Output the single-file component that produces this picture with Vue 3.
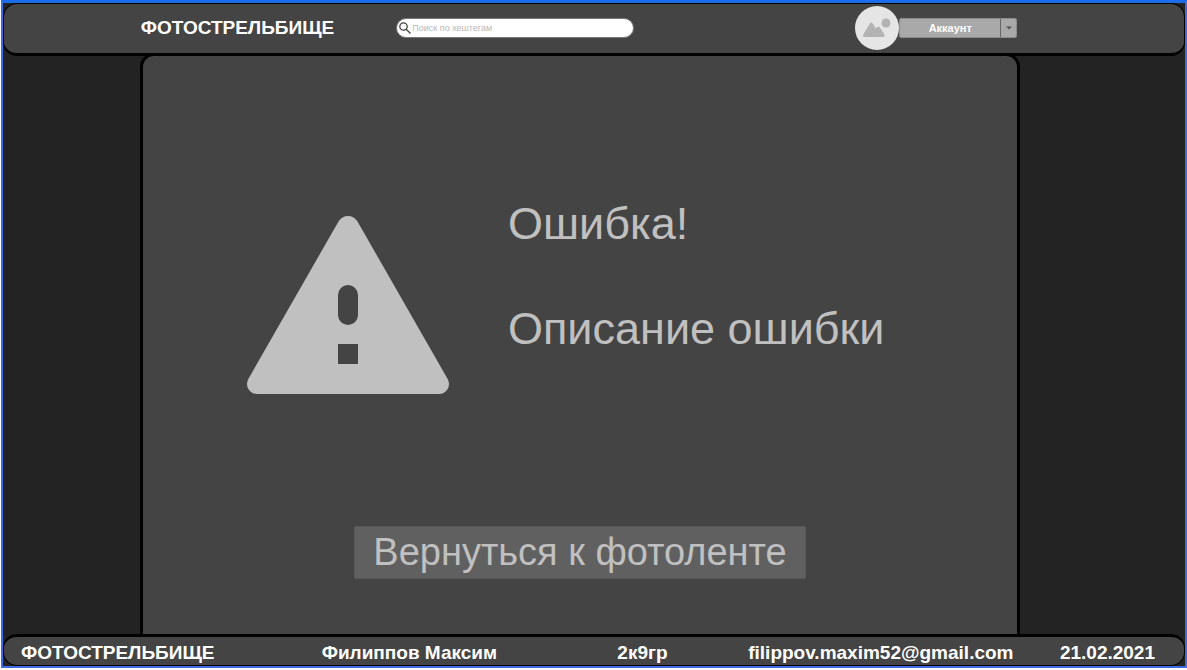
<script setup>
import { ref } from 'vue'

const query = ref('')
const footerItems = ['ФОТОСТРЕЛЬБИЩЕ', 'Филиппов Максим', '2к9гр']
const email = 'filippov.maxim52@gmail.com'
const date = '21.02.2021'
</script>

<template>
  <div class="window">
    <div class="page">
      <header class="header">
        <div class="header-inner">
          <a class="logo" href="#">ФОТОСТРЕЛЬБИЩЕ</a>
          <label class="search">
            <svg class="search-icon" viewBox="0 0 12 12" aria-hidden="true">
              <circle cx="4.5" cy="4.5" r="3.7" />
              <path d="M7.2 7.2 11.5 11.5" />
            </svg>
            <input v-model="query" type="text" placeholder="Поиск по хештегам" aria-label="Поиск по хештегам" />
          </label>
          <div class="account">
            <svg class="avatar" viewBox="0 0 44 44" aria-hidden="true">
              <circle cx="22" cy="22" r="22" fill="#e5e5e5" />
              <circle cx="31" cy="17" r="4.5" fill="#b3b3b3" />
              <path
                d="M8.500 28 14.700 17.800Q16.300 15.300 17.900 17.800L20.800 22.500L22.300 20.900Q23.600 19.800 24.800 21.200L29.400 28.500Q30.400 31 27.800 31H10Q7 31 8.500 28Z"
                fill="#b3b3b3"
              />
            </svg>
            <div class="split">
              <button class="split-main" type="button">Аккаунт</button>
              <button class="split-arrow" type="button" aria-label="Открыть меню">
                <svg viewBox="0 0 6 4" aria-hidden="true"><path d="M0 0.5H6L3 3.5Z" /></svg>
              </button>
            </div>
          </div>
        </div>
      </header>

      <div class="body">
        <main class="panel">
          <section class="error">
            <svg class="warning" viewBox="0 0 202 178" role="img" aria-label="Предупреждение">
              <path
                fill-rule="evenodd"
                d="M91.5 5.5A11 11 0 0 1 110.500 5.500L200.660 163A10 10 0 0 1 192 178H10A10 10 0 0 1 1.340 163ZM91 79V99A10 10 0 0 0 111 99V79A10 10 0 0 0 91 79ZM91 128V148H111V128Z"
              />
            </svg>
            <div class="message">
              <h1>Ошибка!</h1>
              <p>Описание ошибки</p>
            </div>
          </section>
          <button class="back" type="button">Вернуться к фотоленте</button>
        </main>
      </div>

      <footer class="footer">
        <span v-for="item in footerItems" :key="item">{{ item }}</span>
        <a :href="`mailto:${email}`">{{ email }}</a>
        <time datetime="2021-02-21">{{ date }}</time>
      </footer>
    </div>
  </div>
</template>

<style>
body {
  margin: 0;
  background: #fff;
}
</style>

<style scoped>
* {
  box-sizing: border-box;
}

.window {
  min-height: 100vh;
  padding: 0 0 2px 1px;
  display: flex;
  font-family: "Liberation Sans", Arial, sans-serif;
}

.page {
  flex: 1;
  display: flex;
  flex-direction: column;
  border: 2px solid #4169e1;
  border-top: 3px solid #1a6ce8;
  background: #232323;
}

a {
  color: inherit;
  text-decoration: none;
}

button {
  font-family: inherit;
  cursor: pointer;
}

.header {
  display: grid;
  grid-template-columns: 137fr 878fr 167fr;
  height: 53px;
  border: 1px solid #000;
  border-bottom-width: 3px;
  border-radius: 14px;
  background: #444;
}

.header-inner {
  grid-column: 2;
  display: grid;
  grid-template-columns: 256fr 238fr 384fr;
  align-items: center;
  padding-bottom: 2px;
}

.logo {
  color: #fff;
  font-size: 19px;
  font-weight: bold;
}

.search {
  display: flex;
  align-items: center;
  gap: 1px;
  height: 20px;
  padding: 0 10px 0 2px;
  border: 1px solid #777;
  border-radius: 10px;
  background: #fff;
}

.search-icon {
  width: 12px;
  height: 12px;
  flex: none;
  fill: none;
  stroke: #444;
  stroke-width: 1.3;
}

.search input {
  flex: 1;
  min-width: 0;
  padding: 0;
  border: 0;
  outline: 0;
  background: transparent;
  font: 9px "Liberation Sans", Arial, sans-serif;
  color: #444;
}

.search input::placeholder {
  color: #b8b8b8;
  opacity: 1;
}

.account {
  display: flex;
  align-items: center;
  justify-content: flex-end;
}

.avatar {
  width: 44px;
  height: 44px;
}

.split {
  display: flex;
  width: 118px;
  height: 20px;
  border: 1px solid #8c8c8c;
  border-radius: 2px;
  overflow: hidden;
}

.split-main,
.split-arrow {
  padding: 0;
  border: 0;
  background: #a9a9a9;
}

.split-main {
  flex: 1;
  color: #fff;
  font-size: 11px;
  font-weight: bold;
}

.split-arrow {
  display: flex;
  align-items: center;
  justify-content: center;
  width: 16px;
  border-left: 1px solid #666;
}

.split-arrow svg {
  width: 6px;
  height: 4px;
  flex: none;
  fill: #555;
}

.body {
  flex: 1;
  display: grid;
  grid-template-columns: 137fr 880fr 165fr;
  margin-top: -3px;
}

.panel {
  grid-column: 2;
  display: flex;
  flex-direction: column;
  justify-content: space-between;
  padding: 142px 104px 55px;
  border: 3px solid #000;
  border-bottom: 0;
  border-radius: 14px 14px 0 0;
  background: #444;
}

.error {
  display: flex;
  align-items: flex-start;
  gap: 59px;
}

.warning {
  width: 202px;
  height: 178px;
  margin-top: 18px;
  flex: none;
  fill: #c0c0c0;
}

.message {
  display: grid;
  gap: 53px;
  color: #c0c0c0;
  white-space: nowrap;
}

.message h1,
.message p {
  margin: 0;
  font-size: 45px;
  font-weight: normal;
  line-height: 52px;
}

.back {
  align-self: center;
  padding: 0 18px;
  border: 1px solid #585858;
  border-radius: 2px;
  background: #606060;
  color: #c0c0c0;
  font-size: 38px;
  line-height: 51px;
}

.footer {
  display: grid;
  grid-template-columns: 301fr 296fr 131fr 312fr 94fr;
  align-items: center;
  height: 32px;
  padding: 4px 29px 0 17px;
  border: 1px solid #000;
  border-top-width: 3px;
  border-radius: 14px;
  background: #444;
  color: #fff;
  font-size: 19px;
  font-weight: bold;
  line-height: 22px;
  white-space: nowrap;
}
</style>
